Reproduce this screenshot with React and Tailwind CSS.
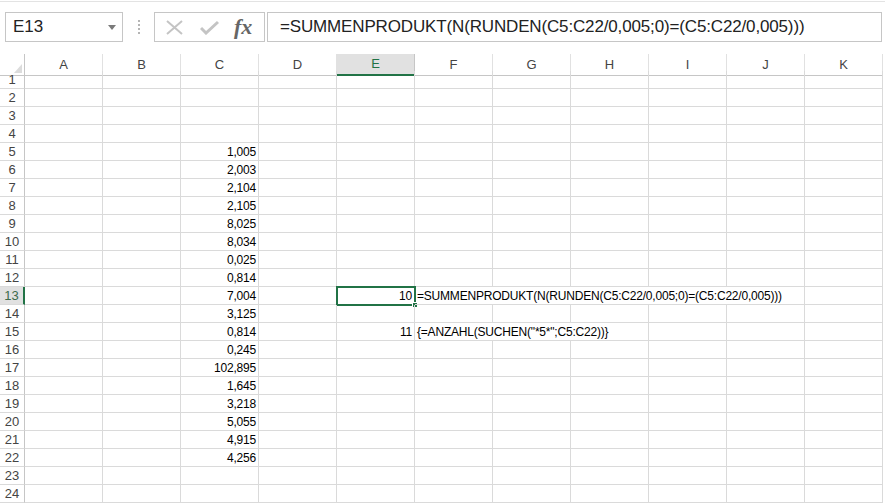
import React from 'react';

const COLS = ['A', 'B', 'C', 'D', 'E', 'F', 'G', 'H', 'I', 'J', 'K'];

const VALUES = {
  5: '1,005', 6: '2,003', 7: '2,104', 8: '2,105', 9: '8,025', 10: '8,034',
  11: '0,025', 12: '0,814', 13: '7,004', 14: '3,125', 15: '0,814', 16: '0,245',
  17: '102,895', 18: '1,645', 19: '3,218', 20: '5,055', 21: '4,915', 22: '4,256',
};

const FORMULA = '=SUMMENPRODUKT(N(RUNDEN(C5:C22/0,005;0)=(C5:C22/0,005)))';

// text that runs over from F into the next cells, with how many columns it covers
const SPILL = {
  13: { text: FORMULA, span: 5 },
  15: { text: '{=ANZAHL(SUCHEN("*5*";C5:C22))}', span: 3 },
};

const E_VALUES = { 13: '10', 15: '11' };

const cellFont = { fontFamily: '"Liberation Sans", Arial, sans-serif' };

function Cell({ children, right, span, className = '' }) {
  const spanCls = span === 5 ? 'col-span-5' : span === 3 ? 'col-span-3' : '';
  return (
    <div
      className={`relative flex items-center border-r border-b border-[#dadada] whitespace-nowrap text-[12px] tracking-[-0.2px] text-black ${right ? 'justify-end pr-[2px]' : 'pl-[2px]'} ${spanCls} ${className}`}
    >
      {children}
    </div>
  );
}

function FormulaBar() {
  return (
    <div className="h-[53px] bg-white" style={cellFont}>
      <div className="mt-[1px] h-px bg-[#e3e3e3]" />
      <div className="mt-[10px] flex h-[30px] items-stretch">
        <div className="ml-[5px] flex w-[118px] items-center justify-between border border-[#c6c6c6] pl-[7px] pr-[6px] text-[17px] text-[#222]">
          <span>E13</span>
          <svg width="8" height="5" viewBox="0 0 8 5"><path d="M0 0h8L4 5z" fill="#7a7a7a" /></svg>
        </div>
        <div className="flex w-[31px] flex-col items-center justify-center gap-[2px]">
          <span className="h-[2px] w-[2px] bg-[#b5b5b5]" />
          <span className="h-[2px] w-[2px] bg-[#b5b5b5]" />
          <span className="h-[2px] w-[2px] bg-[#b5b5b5]" />
          <span className="h-[2px] w-[2px] bg-[#b5b5b5]" />
        </div>
        <div className="flex w-[111px] items-center border border-[#c6c6c6] pl-[10px]">
          <svg width="19" height="15" viewBox="0 0 19 15">
            <path d="M2 1l15 13M17 1L2 14" stroke="#c4c4c4" strokeWidth="2" fill="none" />
          </svg>
          <svg className="ml-[16px]" width="19" height="15" viewBox="0 0 19 15">
            <path d="M1 8l5 5L18 2" stroke="#c4c4c4" strokeWidth="3" fill="none" />
          </svg>
          <span
            className="ml-[15px] text-[22px] font-bold italic leading-none text-[#666]"
            style={{ fontFamily: '"Liberation Serif", "Times New Roman", serif' }}
          >
            fx
          </span>
        </div>
        <div className="ml-[2px] flex w-[615px] items-center border border-[#c6c6c6] pl-[12px] text-[17px] tracking-[-0.15px] text-[#222]">
          {FORMULA}
        </div>
      </div>
    </div>
  );
}

function Header() {
  return (
    <div className="grid h-[17px] grid-cols-[25px_repeat(11,78px)] text-[13px] text-[#444]" style={cellFont}>
      <div className="flex items-end justify-end border-r border-b border-[#c6c6c6] pb-[2px] pr-[2px]">
        <svg width="8" height="9" viewBox="0 0 8 9"><path d="M8 0v9H0z" fill="#dcdcdc" /></svg>
      </div>
      {COLS.map((c) =>
        c === 'E' ? (
          <div key={c} className="flex items-center justify-center border-r border-b-2 border-r-[#c6c6c6] border-b-[#217346] bg-[#e1e1e1] text-[#217346]">
            {c}
          </div>
        ) : (
          <div key={c} className="flex items-center justify-center border-r border-b border-r-[#e1e1e1] border-b-[#c6c6c6]">
            {c}
          </div>
        )
      )}
    </div>
  );
}

function Row({ n }) {
  const spill = SPILL[n];
  const active = n === 13;
  return (
    <>
      <div
        className={`flex items-center justify-center border-b text-[13px] ${active ? 'border-r-2 border-r-[#217346] border-b-[#dadada] bg-[#e1e1e1] text-[#3d6b4b]' : 'border-r border-r-[#c6c6c6] border-b-[#dadada] text-[#444]'}`}
      >
        {n}
      </div>
      <Cell />
      <Cell />
      <Cell right>{VALUES[n]}</Cell>
      <Cell />
      <Cell right>
        {E_VALUES[n]}
        {active && (
          <div className="pointer-events-none absolute -left-px -top-px h-[20px] w-[80px] border-2 border-[#217346]">
            <div className="absolute -bottom-[4px] -right-[4px] h-[6px] w-[6px] border border-white bg-[#217346]" />
          </div>
        )}
      </Cell>
      {spill ? (
        <>
          <Cell span={spill.span}>{spill.text}</Cell>
          {COLS.slice(5 + spill.span).map((c) => <Cell key={c} />)}
        </>
      ) : (
        COLS.slice(5).map((c) => <Cell key={c} />)
      )}
    </>
  );
}

export default function App() {
  const rows = Array.from({ length: 24 }, (_, i) => i + 1);
  return (
    <div className="h-[503px] w-[885px] overflow-hidden bg-white">
      <FormulaBar />
      <Header />
      <div className="grid grid-cols-[25px_repeat(11,78px)] auto-rows-[18px]" style={cellFont}>
        {rows.map((n) => <Row key={n} n={n} />)}
      </div>
    </div>
  );
}
